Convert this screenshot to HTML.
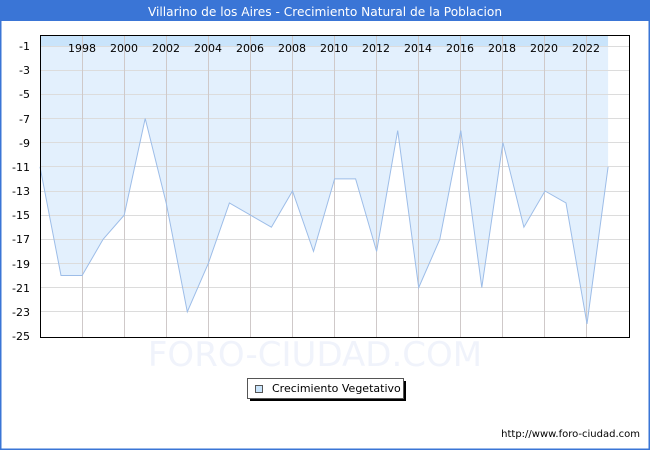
<!DOCTYPE html>
<html><head><meta charset="utf-8"><style>
body{margin:0;width:650px;height:450px;overflow:hidden;font-family:"DejaVu Sans","Liberation Sans",sans-serif;}
</style></head><body>
<svg width="650" height="450" xmlns="http://www.w3.org/2000/svg" font-family="DejaVu Sans, Liberation Sans, sans-serif">
<rect x="0" y="0" width="650" height="450" fill="#fff"/>
<rect x="0.5" y="0.5" width="649" height="449" fill="none" stroke="#3a75d6" stroke-width="2"/>
<rect x="0" y="0" width="650" height="21" fill="#3a75d6"/>
<text x="325" y="16" text-anchor="middle" font-size="12.2" fill="#fff">Villarino de los Aires - Crecimiento Natural de la Poblacion</text>
<text x="315" y="366" text-anchor="middle" font-size="34" fill="#f0f3fb">FORO-CIUDAD.COM</text>
<polygon fill="#e3f0fd" points="40,36 40,166.8 61,275.5 82.1,275.5 103.1,239.3 124.2,215.1 145.2,118.5 166.2,203 187.3,311.8 208.3,263.4 229.4,203 250.4,215.1 271.4,227.2 292.5,191 313.5,251.4 334.6,178.9 355.6,178.9 376.6,251.4 397.7,130.6 418.7,287.6 439.8,239.3 460.8,130.6 481.8,287.6 502.9,142.6 523.9,227.2 545,191 566,203 587,323.9 608.1,166.8 608.1,36"/>
<rect x="40" y="36" width="568" height="11" fill="#c9e4fb"/>
<g stroke="#dcdcdc" stroke-width="1">
<line x1="40" y1="46.5" x2="630" y2="46.5"/><line x1="40" y1="70.5" x2="630" y2="70.5"/><line x1="40" y1="94.5" x2="630" y2="94.5"/><line x1="40" y1="118.5" x2="630" y2="118.5"/><line x1="40" y1="142.5" x2="630" y2="142.5"/><line x1="40" y1="166.5" x2="630" y2="166.5"/><line x1="40" y1="191.5" x2="630" y2="191.5"/><line x1="40" y1="215.5" x2="630" y2="215.5"/><line x1="40" y1="239.5" x2="630" y2="239.5"/><line x1="40" y1="263.5" x2="630" y2="263.5"/><line x1="40" y1="287.5" x2="630" y2="287.5"/><line x1="40" y1="311.5" x2="630" y2="311.5"/>
</g>
<g stroke="#cfc9c9" stroke-width="1">
<line x1="82.5" y1="36" x2="82.5" y2="338"/><line x1="124.5" y1="36" x2="124.5" y2="338"/><line x1="166.5" y1="36" x2="166.5" y2="338"/><line x1="208.5" y1="36" x2="208.5" y2="338"/><line x1="250.5" y1="36" x2="250.5" y2="338"/><line x1="292.5" y1="36" x2="292.5" y2="338"/><line x1="334.5" y1="36" x2="334.5" y2="338"/><line x1="376.5" y1="36" x2="376.5" y2="338"/><line x1="418.5" y1="36" x2="418.5" y2="338"/><line x1="460.5" y1="36" x2="460.5" y2="338"/><line x1="502.5" y1="36" x2="502.5" y2="338"/><line x1="544.5" y1="36" x2="544.5" y2="338"/><line x1="586.5" y1="36" x2="586.5" y2="338"/>
</g>
<polyline fill="none" stroke="#9dbde8" stroke-width="1" points="40,166.8 61,275.5 82.1,275.5 103.1,239.3 124.2,215.1 145.2,118.5 166.2,203 187.3,311.8 208.3,263.4 229.4,203 250.4,215.1 271.4,227.2 292.5,191 313.5,251.4 334.6,178.9 355.6,178.9 376.6,251.4 397.7,130.6 418.7,287.6 439.8,239.3 460.8,130.6 481.8,287.6 502.9,142.6 523.9,227.2 545,191 566,203 587,323.9 608.1,166.8"/>
<rect x="40.5" y="35.5" width="589" height="302" fill="none" stroke="#000" stroke-width="1"/>
<g font-size="11" fill="#000" text-anchor="end">
<text x="30" y="50">-1</text><text x="30" y="74">-3</text><text x="30" y="98">-5</text><text x="30" y="123">-7</text><text x="30" y="147">-9</text><text x="30" y="171">-11</text><text x="30" y="195">-13</text><text x="30" y="219">-15</text><text x="30" y="243">-17</text><text x="30" y="268">-19</text><text x="30" y="292">-21</text><text x="30" y="316">-23</text><text x="30" y="340">-25</text>
</g>
<g font-size="11" fill="#000" text-anchor="middle">
<text x="82" y="52">1998</text><text x="124" y="52">2000</text><text x="166" y="52">2002</text><text x="208" y="52">2004</text><text x="250" y="52">2006</text><text x="292" y="52">2008</text><text x="334" y="52">2010</text><text x="376" y="52">2012</text><text x="418" y="52">2014</text><text x="460" y="52">2016</text><text x="502" y="52">2018</text><text x="544" y="52">2020</text><text x="586" y="52">2022</text>
</g>
<rect x="250" y="381" width="156" height="20" fill="#000"/>
<rect x="247.5" y="378.5" width="156" height="20" fill="#fff" stroke="#555"/>
<rect x="255.5" y="385.5" width="7" height="7" fill="#c9e4fb" stroke="#555"/>
<text x="272" y="392" font-size="11" fill="#000">Crecimiento Vegetativo</text>
<text x="640" y="437" text-anchor="end" font-size="10" fill="#000">http://www.foro-ciudad.com</text>
</svg>
</body></html>
